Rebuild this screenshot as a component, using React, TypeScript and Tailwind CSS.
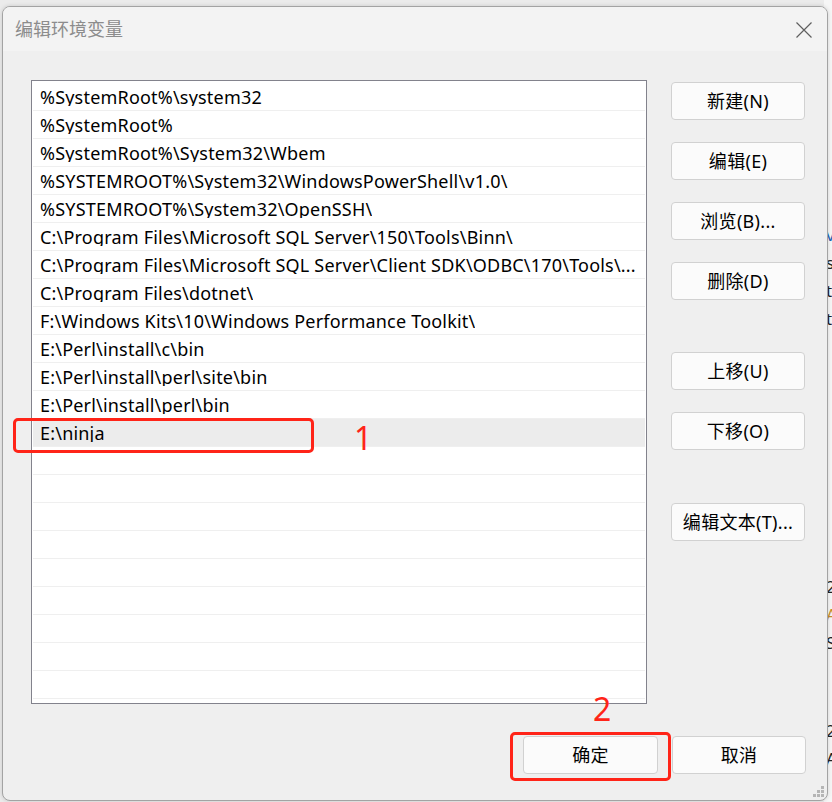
const PATHS = [
  '%SystemRoot%\\system32',
  '%SystemRoot%',
  '%SystemRoot%\\System32\\Wbem',
  '%SYSTEMROOT%\\System32\\WindowsPowerShell\\v1.0\\',
  '%SYSTEMROOT%\\System32\\OpenSSH\\',
  'C:\\Program Files\\Microsoft SQL Server\\150\\Tools\\Binn\\',
  'C:\\Program Files\\Microsoft SQL Server\\Client SDK\\ODBC\\170\\Tools\\...',
  'C:\\Program Files\\dotnet\\',
  'F:\\Windows Kits\\10\\Windows Performance Toolkit\\',
  'E:\\Perl\\install\\c\\bin',
  'E:\\Perl\\install\\perl\\site\\bin',
  'E:\\Perl\\install\\perl\\bin',
  'E:\\ninja',
]

const ROWS = 22
const SELECTED = 12

const FONT = "font-['Noto_Sans','Noto_Sans_CJK_SC',sans-serif]"

function Btn({ label, className = '' }: { label: string; className?: string }) {
  return (
    <button
      className={`flex h-[38px] w-[134px] items-center justify-center rounded-[4px] border border-[#d1d1d1] bg-[#fbfbfb] text-[18px] tracking-[0.3px] text-black ${className}`}
    >
      {label}
    </button>
  )
}

export default function App() {
  const rows = Array.from({ length: ROWS }, (_, i) => PATHS[i] ?? '')

  return (
    <div className={`relative h-[802px] w-[832px] overflow-hidden bg-[#ebebeb] ${FONT}`}>
      {/* window behind, peeking out on the right */}
      <div className="absolute right-0 top-0 flex h-full w-[8px] flex-col overflow-hidden bg-[#f6f6f6] pl-[2px] text-[17px] leading-[28px] text-[#222]">
        <div className="h-[221px] shrink-0" />
        <span className="text-[#1e63b8]">v</span>
        <span>s</span>
        <span>t</span>
        <span>t</span>
        <div className="h-[240px] shrink-0" />
        <span>2</span>
        <span className="text-[#c8902a]">A</span>
        <span>S</span>
        <div className="h-[60px] shrink-0" />
        <span>2</span>
        <span>A</span>
      </div>

      <div className="absolute left-[2px] top-[6px] flex h-[795px] w-[826px] flex-col overflow-hidden rounded-[8px] border border-[#a3a3a3] bg-[#efefef] shadow-[0_0_4px_rgba(0,0,0,0.15)]">
        {/* title bar */}
        <div className="flex h-[44px] shrink-0 items-center justify-between bg-[#f3f3f3] pl-[12px] pr-[15px]">
          <span className="text-[18px] text-[#8c8c8c]">编辑环境变量</span>
          <svg width="16" height="16" viewBox="0 0 16 16" className="mt-[1px]">
            <path d="M0.5 0.5L15.5 15.5M15.5 0.5L0.5 15.5" stroke="#5f5f5f" strokeWidth="1.2" fill="none" />
          </svg>
        </div>

        {/* body */}
        <div className="flex flex-1 flex-col pl-[28px] pt-[29px]">
          <div className="flex">
            <div className="flex h-[624px] w-[616px] flex-col overflow-hidden border border-[#82828c] bg-white pt-[2px]">
              {rows.map((p, i) => (
                <div
                  key={i}
                  className={`mx-[1px] flex h-[28px] shrink-0 items-center border-b border-[#efefef] pl-[7px] ${
                    i === SELECTED ? 'bg-[#ececec]' : ''
                  }`}
                >
                  <span className="overflow-hidden whitespace-nowrap text-[18px] leading-none tracking-[0.2px] text-black">
                    {p}
                  </span>
                </div>
              ))}
            </div>

            <div className="ml-[24px] flex flex-col pt-[2px]">
              <Btn label="新建(N)" />
              <Btn label="编辑(E)" className="mt-[22px]" />
              <Btn label="浏览(B)..." className="mt-[22px]" />
              <Btn label="删除(D)" className="mt-[22px]" />
              <Btn label="上移(U)" className="mt-[52px]" />
              <Btn label="下移(O)" className="mt-[22px]" />
              <Btn label="编辑文本(T)..." className="mt-[53px]" />
            </div>
          </div>

          <div className="mt-[32px] flex justify-end gap-[14px] pr-[21px]">
            <Btn label="确定" className="w-[135px]" />
            <Btn label="取消" />
          </div>
        </div>

        {/* resize grip */}
        <svg className="absolute bottom-[3px] right-[3px]" width="11" height="11" viewBox="0 0 11 11">
          {[
            [8, 0],
            [4, 4],
            [8, 4],
            [0, 8],
            [4, 8],
            [8, 8],
          ].map(([x, y]) => (
            <rect key={`${x}-${y}`} x={x} y={y} width="3" height="3" fill="#b5b5b5" />
          ))}
        </svg>
      </div>

      {/* red annotations */}
      <div className="absolute left-[13px] top-[418px] h-[35px] w-[301px] rounded-[5px] border-[3px] border-[#ff2418]" />
      <span className="absolute left-[354px] top-[418px] text-[32px] leading-[40px] text-[#ff2418]">1</span>
      <span className="absolute left-[593px] top-[689px] text-[32px] leading-[40px] text-[#ff2418]">2</span>
      <div className="absolute left-[510px] top-[732px] h-[49px] w-[161px] rounded-[5px] border-[3px] border-[#ff2418]" />
    </div>
  )
}
